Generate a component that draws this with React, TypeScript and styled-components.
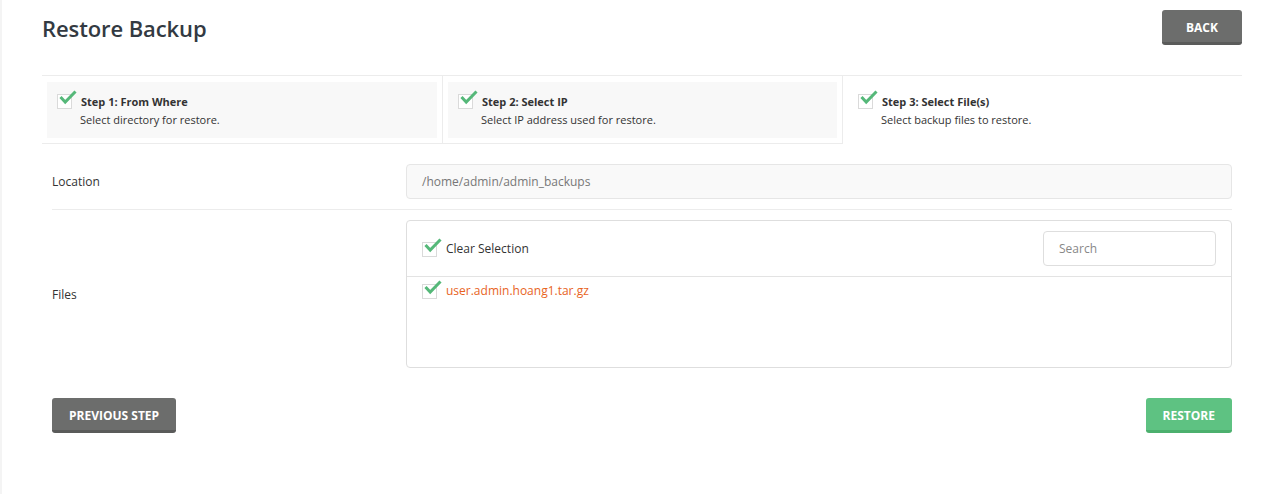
import React from "react";
import styled, { createGlobalStyle } from "styled-components";

const Global = createGlobalStyle`
  html, body { margin: 0; padding: 0; background: #f4f4f4; }
  body { font-family: "Open Sans", "Noto Sans", Arial, sans-serif; color: #333; }
  * { box-sizing: border-box; }
`;

const Page = styled.div`
  margin-left: 2px;
  background: #fff;
  min-height: 494px;
  padding: 10px 24px 0 40px;
`;

const Header = styled.div`
  display: flex;
  justify-content: space-between;
  align-items: flex-start;
  height: 66px;
  border-bottom: 1px solid #ececec;
`;

const Title = styled.h1`
  margin: 3px 0 0 0;
  font-size: 22px;
  font-weight: 600;
  color: #333a42;
  letter-spacing: -0.1px;
`;

const Button = styled.button<{ $variant?: "gray" | "green" }>`
  height: 35px;
  padding: 2px 17px 0 17px;
  border: none;
  border-radius: 3px;
  font-family: inherit;
  font-size: 12px;
  font-weight: 700;
  color: #fff;
  text-transform: uppercase;
  background: ${(p) => (p.$variant === "green" ? "#5ec282" : "#6c6d6c")};
  border-bottom: 3px solid ${(p) => (p.$variant === "green" ? "#4cb06e" : "#5a5b5a")};
  cursor: pointer;
`;

const BackButton = styled(Button)`
  width: 80px;
  padding: 2px 0 0 0;
`;

const Steps = styled.div`
  display: grid;
  grid-template-columns: 401px 400px 1fr;
`;

const Step = styled.div<{ $done?: boolean }>`
  padding: 6px 5px 5px 5px;
  border-right: ${(p) => (p.$done ? "1px solid #ececec" : "none")};
  border-left: ${(p) => (p.$done ? "none" : "1px solid #ececec")};
  margin-left: ${(p) => (p.$done ? "0" : "-1px")};
  border-bottom: ${(p) => (p.$done ? "1px solid #ececec" : "none")};
  height: ${(p) => (p.$done ? "68px" : "63px")};
`;

const StepInner = styled.div<{ $done?: boolean }>`
  background: ${(p) => (p.$done ? "#f8f8f8" : "transparent")};
  height: 56px;
  padding: 11px 10px 0 10px;
  display: flex;
  gap: 9px;
`;

const StepText = styled.div`
  display: flex;
  flex-direction: column;
  font-size: 11px;
  line-height: 16px;
  margin-top: 1px;
`;

const StepTitle = styled.div`
  font-weight: 700;
  color: #333;
`;

const StepDesc = styled.div`
  color: #333;
  margin-left: -1px;
  margin-top: 2px;
`;

const CheckWrap = styled.span`
  position: relative;
  display: inline-block;
  width: 15px;
  height: 15px;
  flex: none;
  border: 1px solid #dadada;
  background: #fff;
  margin-top: 1px;
`;

const CheckSvg = styled.svg`
  position: absolute;
  left: 1px;
  top: -3px;
  overflow: visible;
`;

const Check = () => (
  <CheckWrap>
    <CheckSvg width="17" height="14" viewBox="0 0 17 14">
      <path d="M1.5 5 L6.2 10 L16.5 -0.5" fill="none" stroke="#55b879" strokeWidth="3" strokeLinecap="butt" strokeLinejoin="miter" />
    </CheckSvg>
  </CheckWrap>
);

const Form = styled.div`
  padding: 20px 10px 0 10px;
`;

const Row = styled.div<{ $last?: boolean }>`
  display: grid;
  grid-template-columns: 354px 1fr;
  align-items: center;
  padding: ${(p) => (p.$last ? "10px 0 0 0" : "0 0 10px 0")};
  border-bottom: ${(p) => (p.$last ? "none" : "1px solid #ececec")};
`;

const Label = styled.div`
  font-size: 12px;
  color: #333;
`;

const Input = styled.div`
  height: 35px;
  border: 1px solid #e6e6e6;
  border-radius: 4px;
  background: #f9f9f9;
  color: #777;
  font-size: 12px;
  display: flex;
  align-items: center;
  padding-left: 15px;
`;

const Panel = styled.div`
  border: 1px solid #dedede;
  border-radius: 4px;
  height: 148px;
`;

const PanelHead = styled.div`
  height: 56px;
  border-bottom: 1px solid #e3e3e3;
  display: flex;
  align-items: center;
  justify-content: space-between;
  padding: 0 15px;
`;

const CheckLabel = styled.label<{ $file?: boolean }>`
  display: flex;
  align-items: center;
  gap: 9px;
  font-size: 12px;
  color: ${(p) => (p.$file ? "#e8641e" : "#333")};
  font-weight: ${(p) => (p.$file ? 500 : 400)};
`;

const Search = styled.input`
  width: 173px;
  height: 35px;
  border: 1px solid #dedede;
  border-radius: 4px;
  padding: 0 15px;
  font-family: inherit;
  font-size: 12px;
  color: #333;
  &::placeholder { color: #888; }
  outline: none;
`;

const FileList = styled.div`
  padding: 6px 15px;
`;

const Footer = styled.div`
  display: flex;
  justify-content: space-between;
  padding: 30px 10px 0 10px;
`;

const FileRow = styled(CheckLabel)`
  align-items: flex-start;
  line-height: 16px;
`;

export default function App() {
  return (
    <>
      <Global />
      <Page>
        <Header>
          <Title>Restore Backup</Title>
          <BackButton>Back</BackButton>
        </Header>
        <Steps>
          <Step $done>
            <StepInner $done>
              <Check />
              <StepText>
                <StepTitle>Step 1: From Where</StepTitle>
                <StepDesc>Select directory for restore.</StepDesc>
              </StepText>
            </StepInner>
          </Step>
          <Step $done>
            <StepInner $done>
              <Check />
              <StepText>
                <StepTitle>Step 2: Select IP</StepTitle>
                <StepDesc>Select IP address used for restore.</StepDesc>
              </StepText>
            </StepInner>
          </Step>
          <Step>
            <StepInner>
              <Check />
              <StepText>
                <StepTitle>Step 3: Select File(s)</StepTitle>
                <StepDesc>Select backup files to restore.</StepDesc>
              </StepText>
            </StepInner>
          </Step>
        </Steps>
        <Form>
          <Row>
            <Label>Location</Label>
            <Input>/home/admin/admin_backups</Input>
          </Row>
          <Row $last>
            <Label>Files</Label>
            <Panel>
              <PanelHead>
                <CheckLabel>
                  <Check />
                  Clear Selection
                </CheckLabel>
                <Search placeholder="Search" />
              </PanelHead>
              <FileList>
                <FileRow $file>
                  <Check />
                  <span>user.admin.hoang1.tar.gz</span>
                </FileRow>
              </FileList>
            </Panel>
          </Row>
        </Form>
        <Footer>
          <Button>Previous Step</Button>
          <Button $variant="green">Restore</Button>
        </Footer>
      </Page>
    </>
  );
}
